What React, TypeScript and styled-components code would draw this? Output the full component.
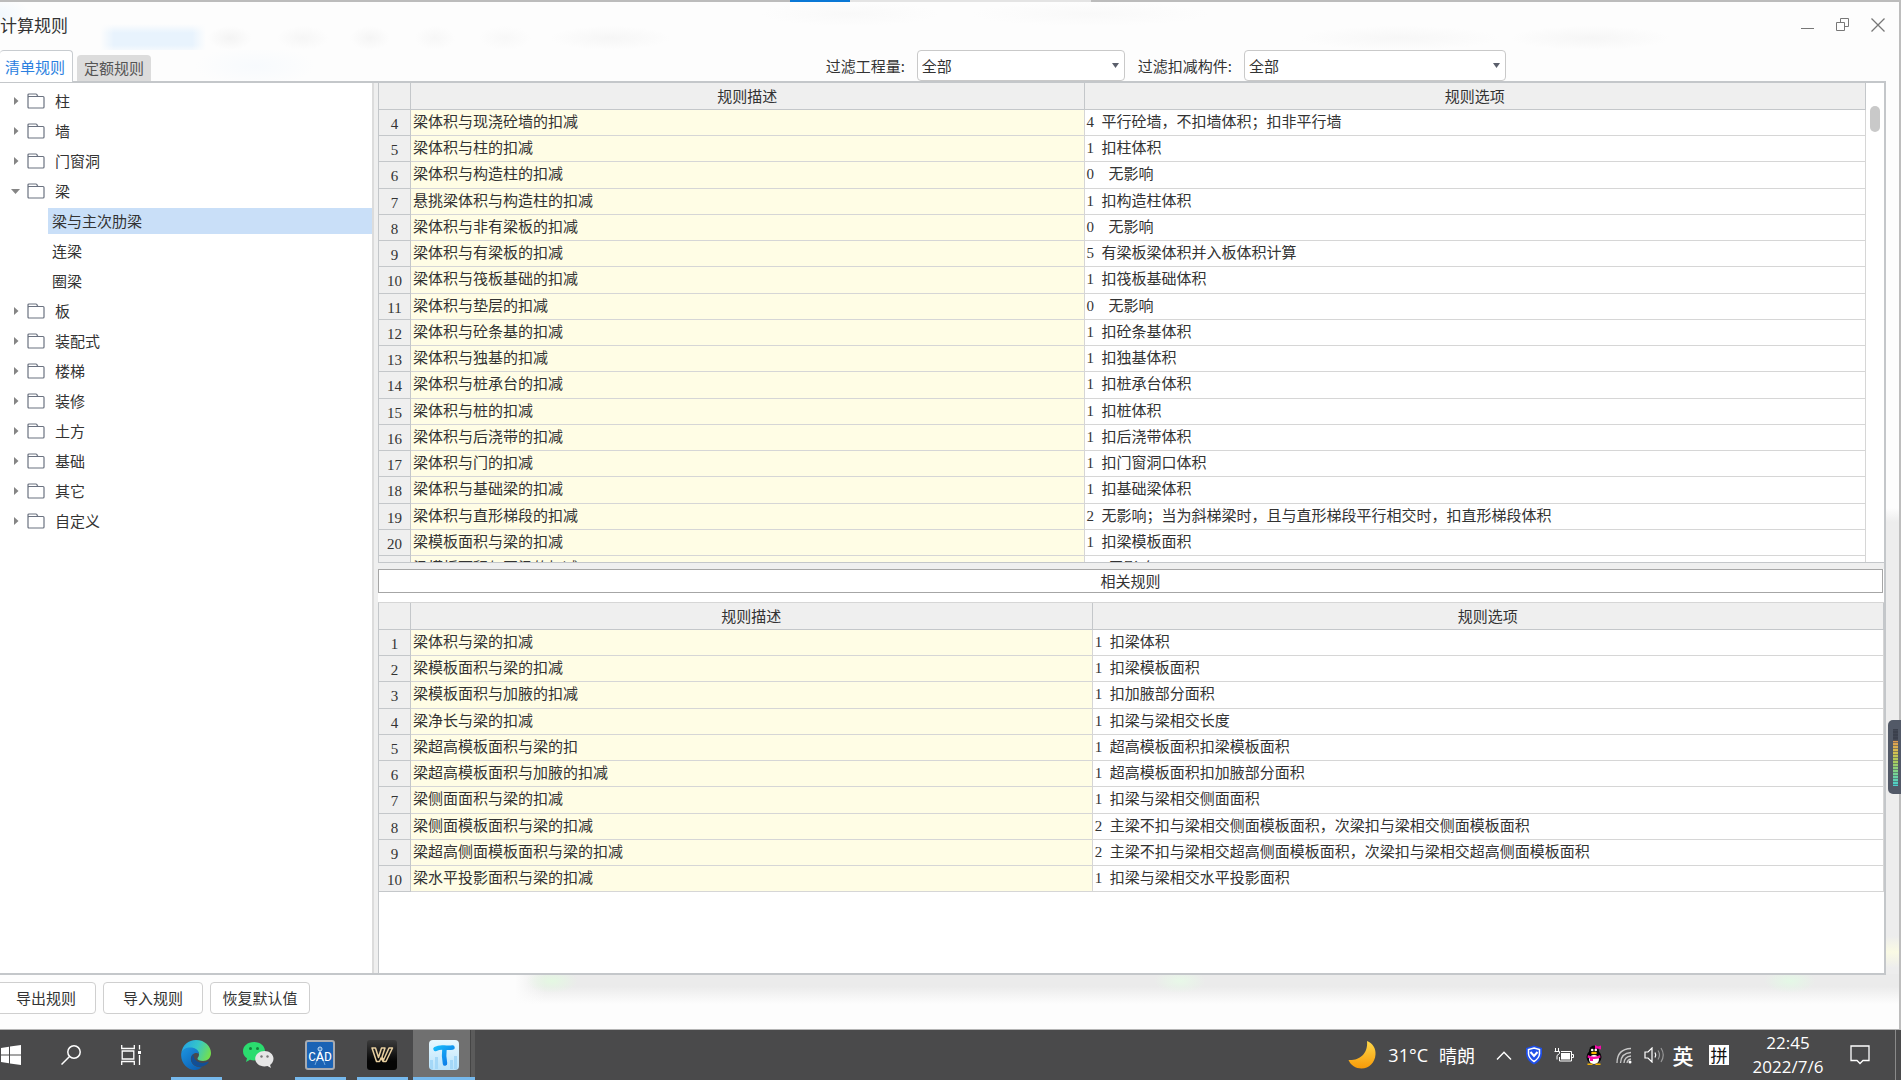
import React from "react";
import styled, { createGlobalStyle, css } from "styled-components";

const GlobalStyle = createGlobalStyle`
  * { box-sizing: border-box; }
  body { margin: 0; }
  body, button, select {
    font-family: "Noto Sans CJK SC", "Liberation Sans", sans-serif;
    font-size: 15px;
    line-height: 20px;
    color: #333;
  }
  button { border: 0; padding: 0; background: none; }
  svg { display: block; flex: none; }
`;

const line = "#c4c7ca";
const grid = "#d6d6d6";

const Screen = styled.div`
  height: 100vh;
  display: flex;
  flex-direction: column;
  overflow: hidden;
  position: relative;
`;

const Window = styled.main`
  flex: 1;
  min-height: 0;
  display: flex;
  flex-direction: column;
  border-right: 2px solid #bdbdbd;
  border-bottom: 1px solid #b4b4b4;
  background:
    radial-gradient(ellipse 26px 12px at 552px 981px, #e4f8e2, transparent),
    radial-gradient(ellipse 26px 12px at 1180px 981px, #e8f8e8, transparent),
    radial-gradient(ellipse 26px 12px at 1790px 981px, #e4f8e6, transparent),
    linear-gradient(transparent, #fafae4 50%, transparent) 100% 936px / 13px 32px no-repeat,
    linear-gradient(#fdfdfd, #ededed 14px) 100% 508px / 13px 466px no-repeat,
    linear-gradient(to right, #fdfdfd, transparent) 515px 972px / 30px 32px no-repeat,
    linear-gradient(#ebebeb 45%, #fdfdfd) 515px 972px / 1390px 32px no-repeat,
    #fdfdfd;
`;

const TopEdge = styled.div`
  height: 2px;
  flex: none;
  display: grid;
  grid-template-columns: 790px 60px 241px 1fr;
  background: #bcbcbc;
  span:nth-child(2) { background: #0a78d6; }
  span:nth-child(3) { background: #e4e4e4; }
`;

const TitleBar = styled.header`
  height: 48px;
  flex: none;
  display: flex;
  align-items: center;
  justify-content: space-between;
  padding: 0 4px 3px 0;
  background:
    radial-gradient(ellipse 60px 12px at 610px 36px, #f6f6f6, transparent),
    radial-gradient(ellipse 26px 12px at 505px 36px, #f8f8f8, transparent),
    radial-gradient(ellipse 20px 12px at 435px 36px, #f7f7f7, transparent),
    radial-gradient(ellipse 20px 12px at 370px 36px, #f5f5f5, transparent),
    radial-gradient(ellipse 26px 12px at 303px 36px, #f6f6f6, transparent),
    radial-gradient(ellipse 22px 12px at 230px 36px, #f4f4f4, transparent),
    linear-gradient(to right, #fdfdfd, transparent 14px calc(100% - 14px), #fdfdfd) 100px 22px / 106px 30px no-repeat,
    linear-gradient(#fdfdfd, #e8f3fd 30% 70%, #fdfdfd) 100px 22px / 106px 30px no-repeat,
    radial-gradient(ellipse 30px 16px at 0 12px, #f1f8fd, transparent),
    radial-gradient(ellipse 90px 12px at 850px 12px, #f9f9f9, transparent),
    radial-gradient(ellipse 120px 12px at 1090px 12px, #f9f9f9, transparent),
    radial-gradient(ellipse 100px 12px at 1400px 36px, #f7f7f7, transparent),
    radial-gradient(ellipse 80px 12px at 1590px 36px, #f6f6f6, transparent);
`;

const Title = styled.h1`
  margin: 0;
  font-size: 17px;
  font-weight: 400;
`;

const WindowButtons = styled.div`
  display: flex;
  button {
    width: 35px;
    height: 30px;
    display: grid;
    place-items: center;
  }
`;

const Toolbar = styled.div`
  height: 33px;
  flex: none;
  display: flex;
  align-items: flex-end;
  justify-content: space-between;
  margin-right: 13px;
  padding-right: 380px;
  border-bottom: 2px solid ${line};
  background: radial-gradient(ellipse 60px 20px at 255px 16px, #f7fafd, transparent);
`;

const Tabs = styled.div`
  display: flex;
  align-items: flex-end;
  gap: 4px;
`;

const Tab = styled.button<{ $active?: boolean }>`
  height: 26px;
  padding: 0 7px;
  border-radius: 4px 4px 0 0;
  background: #dcdcdc;
  color: #555;
  ${(p) =>
    p.$active &&
    css`
      height: 32px;
      margin-bottom: -1px;
      padding: 0 7px 0 5px;
      border: 1px solid #c8ccd0;
      border-width: 1px 1px 0 0;
      background: #fff;
      color: #2b7fe0;
    `}
`;

const Filters = styled.div`
  display: flex;
  align-items: center;
  label { margin-right: 12px; }
  label:not(:first-child) { margin-left: 13px; }
`;

const SelectBox = styled.div<{ $width: number }>`
  display: grid;
  align-items: center;
  width: ${(p) => p.$width}px;
  > * { grid-area: 1 / 1; }
  svg { justify-self: end; margin-right: 6px; pointer-events: none; }
`;

const Select = styled.select`
  appearance: none;
  width: 100%;
  height: 31px;
  padding: 0 4px;
  border: 1px solid #c9c9c9;
  border-radius: 4px;
  background: #fff;
`;

const Body = styled.div`
  flex: 1;
  min-height: 0;
  display: grid;
  grid-template-columns: 374px 4px minmax(0, 1fr);
  grid-template-rows: minmax(0, 1fr);
  margin-right: 13px;
  border-right: 2px solid ${line};
  border-bottom: 2px solid ${line};
  background: #fff;
`;

const Tree = styled.ul`
  list-style: none;
  margin: 0;
  padding: 3px 0 0;
  border-right: 2px solid #dcdcdc;
  overflow: hidden;
`;

const SubTree = styled.ul`
  list-style: none;
  margin: 0;
  padding: 0;
  li { padding: 2px 0 2px 48px; }
`;

const Branch = styled.button`
  height: 30px;
  width: 100%;
  padding-left: 11px;
  display: grid;
  grid-template-columns: 16px 28px 1fr;
  align-items: center;
  text-align: left;
`;

const Leaf = styled.button<{ $selected?: boolean }>`
  display: block;
  width: 100%;
  height: 26px;
  padding-left: 4px;
  text-align: left;
  background: ${(p) => (p.$selected ? "#c9dff8" : "transparent")};
`;

const Splitter = styled.div`
  background: #efefef;
`;

const Panes = styled.div`
  display: grid;
  grid-template-rows: minmax(0, 480fr) 6px 24px 9px minmax(0, 371fr);
`;

const Pane = styled.div<{ $scroll?: boolean }>`
  display: grid;
  grid-template-columns: minmax(0, 1fr) ${(p) => (p.$scroll ? "18px" : "0")};
  align-items: start;
  overflow: hidden;
  border-left: 1px solid ${line};
  ${(p) => p.$scroll && css`border-bottom: 1px solid ${line};`}
  ${(p) => !p.$scroll && css`border-top: 1px solid ${grid};`}
`;

const RelatedTitle = styled.h2`
  margin: 0 1px 0 0;
  border: 1px solid #a6a6a6;
  font-size: 15px;
  font-weight: 400;
  line-height: 22px;
  text-align: center;
  background: #fff;
`;

const ScrollTrack = styled.div`
  padding: 23px 4px 0 4px;
`;

const Thumb = styled.div`
  height: 26px;
  border-radius: 5px;
  background: #c9c9c9;
`;

const Table = styled.table`
  width: 100%;
  table-layout: fixed;
  border-collapse: separate;
  border-spacing: 0;
  th, td {
    padding: 0 2px 4px;
    border-right: 1px solid ${grid};
    border-bottom: 1px solid ${grid};
    font-weight: 400;
    text-align: left;
    white-space: pre;
    overflow: hidden;
  }
  thead tr { height: 27px; }
  thead th {
    padding-bottom: 0;
    border-color: ${line};
    background: #efefef;
    text-align: center;
  }
  tbody tr { height: 26px; }
  tbody tr:nth-child(4n + 3) { height: 27px; }
  tbody th {
    padding: 2px 2px 0;
    border-color: ${line};
    background: #efefef;
    font: 15px/20px "Liberation Serif", serif;
    text-align: center;
  }
  tbody td:nth-child(2) { background: #fffde5; }
  col:nth-child(1) { width: 32px; }
  col:nth-child(2) { width: 45.3%; }
`;

const Code = styled.span<{ $wide?: boolean }>`
  display: inline-block;
  width: ${(p) => (p.$wide ? 22 : 15)}px;
  font: 15px/16px "Liberation Serif", serif;
`;

const Footer = styled.footer`
  height: 54px;
  flex: none;
  display: flex;
  gap: 7px;
  padding-top: 7px;
  margin-left: -4px;
`;

const PushButton = styled.button`
  width: 100px;
  height: 32px;
  border: 1px solid #cfcfcf;
  border-radius: 4px;
  background: #fff;
`;

const Meter = styled.div`
  position: absolute;
  right: 0;
  top: 720px;
  width: 13px;
  height: 74px;
  padding: 9px 3px 8px 5px;
  border-radius: 5px 0 0 5px;
  background: #525967;
`;

const MeterBars = styled.div`
  height: 100%;
  background:
    repeating-linear-gradient(transparent 0 1px, rgba(70, 76, 90, 0.55) 1px 2px, transparent 2px 3px),
    linear-gradient(#3b404d 20%, #e09a50 21%, #d8c050 40%, #b0cc58 55%, #7fd48a 75%, #48cfd0);
`;

const Taskbar = styled.nav`
  height: 50px;
  flex: none;
  display: flex;
  background: #4a4a4b;
  button, button * { color: #fff; }
`;

const TaskItem = styled.button<{ $w: number; $start?: boolean }>`
  width: ${(p) => p.$w}px;
  display: grid;
  align-items: center;
  justify-items: ${(p) => (p.$start ? "start" : "center")};
`;

const Apps = styled.div`
  display: flex;
  margin-left: 4px;
`;

const AppItem = styled.button<{ $running?: boolean; $active?: boolean }>`
  width: 62px;
  display: grid;
  grid-template-rows: 47px 3px;
  justify-items: center;
  align-items: center;
  background: ${(p) => (p.$active ? "linear-gradient(to right, #707070 57px, #454545 57px 58px, #5b5b5b 58px)" : "none")};
  &::after {
    content: "";
    width: ${(p) => (p.$active ? 62 : 51)}px;
    height: 3px;
    background: ${(p) => (p.$running ? "#76b9ed" : "transparent")};
  }
  svg { margin-top: 3px; }
`;

const Weather = styled.button`
  display: flex;
  align-items: center;
  gap: 11px;
  margin-left: auto;
  padding-right: 14px;
  font-size: 18px;
  span:first-of-type { font-family: "Open Sans", sans-serif; }
`;

const Ime = styled.span`
  font-size: 21px;
  font-weight: 500;
`;

const Pinyin = styled.span`
  width: 20px;
  height: 20px;
  background: #fff;
  font-size: 17px;
  line-height: 19px;
  button && { color: #111; }
`;

const Clock = styled.button`
  width: 94px;
  font: 17px/24px "Open Sans", sans-serif;
  time { display: block; }
`;

const ShowDesktop = styled.button`
  width: 6px;
  margin-left: 10px;
  border-left: 1px solid #8a8a8a;
`;

const Caret = ({ open }: { open?: boolean }) => (
  <svg width="9" height="9" viewBox="0 0 9 9">
    <path d={open ? "M0 2h9L4.500 7z" : "M3 0v8L7.500 4z"} fill="#858585" />
  </svg>
);

const Folder = () => (
  <svg width="18" height="16" viewBox="0 0 18 16" fill="none" stroke="#6b7280" strokeWidth="1.2">
    <path d="M1 5V2Q1 1 2 1h7q1 0 1 1l1 1.500h5q1 0 1 1V14q0 1-1 1H2q-1 0-1-1V4.500Q1 3.500 2 3.500h9" />
  </svg>
);

const DropArrow = () => (
  <svg width="7" height="5" viewBox="0 0 7 5"><path d="M0 0h7L3.500 5z" fill="#5a5f6b" /></svg>
);

const EdgeLogo = () => (
  <svg width="30" height="30" viewBox="0 0 30 30">
    <defs>
      <linearGradient id="edgeTop" x1="0" y1="0.300" x2="1" y2="0.600">
        <stop offset="0" stopColor="#23a3e6" /><stop offset="0.500" stopColor="#36c6c8" /><stop offset="1" stopColor="#74e04c" />
      </linearGradient>
      <linearGradient id="edgeLow" x1="0" y1="0" x2="0.800" y2="1">
        <stop offset="0" stopColor="#1d95e0" /><stop offset="1" stopColor="#0b5fb4" />
      </linearGradient>
    </defs>
    <path d="M0.300 13C1.500 5 7.500 0 15 0c9 0 15 6.500 15 13 0 5-3.500 8-8 8-3.500 0-5.500-1.200-5.500-2.500 0-1 1.500-1.500 1.500-4C18 11 14 8 9.500 8 5 8 1.500 10 .300 13z" fill="url(#edgeTop)" />
    <path d="M0.300 13C1.500 9.500 5 7.500 9.500 7.500c4.500 0 8 2.500 8.500 6-5-2-9 2-8 7 1 5 7 7.500 11 6.500-2 2-4 3-7 3C6 30-1 22 .300 13z" fill="url(#edgeLow)" />
    <path d="M12.500 14C9 17 9.500 24 15 26c5 2 9.500 0 12.500-3.500.500-.700 0-1-.700-.700C20 25 12 21 12.500 14z" fill="#124f96" />
  </svg>
);

const WeChatLogo = () => (
  <svg width="31" height="26" viewBox="0 0 31 26">
    <path d="M11 0C4.500 0 0 4 0 9.200c0 3 1.500 5.500 4 7L3 20l4-2.200c1.500.500 2.700.600 4 .600 6.500 0 11-4.200 11-9.200S17.500 0 11 0z" fill="#2bdc6f" />
    <circle cx="7.500" cy="6.500" r="1.500" fill="#14803c" /><circle cx="14.500" cy="6.500" r="1.500" fill="#14803c" />
    <path d="M21.500 9c-5 0-9.300 3.300-9.300 7.700s4.300 7.700 9.300 7.700c1 0 2-.100 3-.400l3.500 1.900-.900-3c2-1.500 3.400-3.700 3.400-6.200C30.500 12.300 26.500 9 21.500 9z" fill="#e6e6e6" />
    <circle cx="18.500" cy="14.500" r="1.200" fill="#777" /><circle cx="24.500" cy="14.500" r="1.200" fill="#777" />
  </svg>
);

const CadLogo = () => (
  <svg width="30" height="30" viewBox="0 0 30 30">
    <rect width="30" height="30" rx="3" fill="#a8abb0" />
    <rect x="2" y="2" width="26" height="26" rx="1" fill="#1a63b5" />
    <path d="M15 8v3M15 11l-5 14M15 11l5 14" stroke="#6fa8e0" fill="none" />
    <circle cx="15" cy="9" r="2" fill="none" stroke="#cfe4f8" />
    <text x="15" y="21" textAnchor="middle" fontFamily="Liberation Mono, monospace" fontSize="13" fill="#fff">CAD</text>
  </svg>
);

const WLogo = () => (
  <svg width="30" height="30" viewBox="0 0 30 30">
    <defs>
      <linearGradient id="wBg" x1="0" y1="0" x2="0" y2="1"><stop offset="0" stopColor="#3c3c3c" /><stop offset="0.700" stopColor="#050505" /></linearGradient>
    </defs>
    <rect width="30" height="30" rx="3" fill="url(#wBg)" />
    <path d="M5 8h3.500l3 9.500 3-9.500H18l-3 9 1.500 3L22 8h3.500l-6.500 13.500h-3L14 18l-1.500 3.500h-3z" fill="none" stroke="#e8cfa0" strokeWidth="1.500" strokeLinejoin="round" />
  </svg>
);

const TLogo = () => (
  <svg width="30" height="30" viewBox="0 0 30 30">
    <defs>
      <linearGradient id="tBg" x1="0" y1="0" x2="0" y2="1"><stop offset="0" stopColor="#e8f8ff" /><stop offset="1" stopColor="#b9e3fb" /></linearGradient>
      <linearGradient id="tFg" x1="0" y1="0" x2="1" y2="1"><stop offset="0" stopColor="#16b8fa" /><stop offset="1" stopColor="#0a74e6" /></linearGradient>
    </defs>
    <rect width="30" height="30" rx="4" fill="url(#tBg)" />
    <path d="M1 20h3v9H1zM6 17h3v12H6zM21 20h3v9h-3zM25 16h3v13h-3z" fill="#a4d8f8" />
    <path d="M6.500 9Q10 7 15 7.500q5 .500 8.500 0M15.500 8q-1 8 .500 15.500" fill="none" stroke="url(#tFg)" strokeWidth="4.500" strokeLinecap="round" />
  </svg>
);

const Moon = () => (
  <svg width="29" height="28" viewBox="0 0 29 28">
    <defs><linearGradient id="moon" x1="0" y1="0" x2="0" y2="1"><stop offset="0" stopColor="#ffd84a" /><stop offset="1" stopColor="#f79a08" /></linearGradient></defs>
    <path d="M19 0c6 2.500 9 7.500 8.500 13.500C27 21.500 21 27.500 13.500 27.500 7.500 27.500 3 24.500.500 19c9 1 20-5 18.500-19z" fill="url(#moon)" />
  </svg>
);

const QQ = () => (
  <svg width="18" height="20" viewBox="0 0 18 20">
    <ellipse cx="9" cy="12" rx="7.500" ry="7" fill="#080808" />
    <ellipse cx="9" cy="6.500" rx="5" ry="6" fill="#080808" />
    <ellipse cx="9" cy="14.500" rx="5" ry="4.500" fill="#fff" />
    <path d="M3 10q6 3.500 12 0l.500 2.500Q9 15.500 2.500 12.500z" fill="#f50aa8" />
    <path d="M5 12h3v4H5zM10 0l3 1.500L16 .500v4l-3-1L10 4z" fill="#f50aa8" />
    <circle cx="7.200" cy="5" r="1.300" fill="#fff" /><circle cx="10.800" cy="5" r="1.300" fill="#fff" />
    <ellipse cx="9" cy="8" rx="3" ry="1.200" fill="#f6b400" />
    <path d="M2.500 18.500h5V20h-5zM10.500 18.500h5V20h-5z" fill="#f6b400" />
  </svg>
);

type Rule = [string, string, string];

const RULES: Rule[] = [
  ["梁体积与现浇砼墙的扣减", "4", "平行砼墙，不扣墙体积；扣非平行墙"],
  ["梁体积与柱的扣减", "1", "扣柱体积"],
  ["梁体积与构造柱的扣减", "0", "无影响"],
  ["悬挑梁体积与构造柱的扣减", "1", "扣构造柱体积"],
  ["梁体积与非有梁板的扣减", "0", "无影响"],
  ["梁体积与有梁板的扣减", "5", "有梁板梁体积并入板体积计算"],
  ["梁体积与筏板基础的扣减", "1", "扣筏板基础体积"],
  ["梁体积与垫层的扣减", "0", "无影响"],
  ["梁体积与砼条基的扣减", "1", "扣砼条基体积"],
  ["梁体积与独基的扣减", "1", "扣独基体积"],
  ["梁体积与桩承台的扣减", "1", "扣桩承台体积"],
  ["梁体积与桩的扣减", "1", "扣桩体积"],
  ["梁体积与后浇带的扣减", "1", "扣后浇带体积"],
  ["梁体积与门的扣减", "1", "扣门窗洞口体积"],
  ["梁体积与基础梁的扣减", "1", "扣基础梁体积"],
  ["梁体积与直形梯段的扣减", "2", "无影响；当为斜梯梁时，且与直形梯段平行相交时，扣直形梯段体积"],
  ["梁模板面积与梁的扣减", "1", "扣梁模板面积"],
  ["梁模板面积与圈梁的扣减", "0", "无影响"],
];

const RELATED: Rule[] = [
  ["梁体积与梁的扣减", "1", "扣梁体积"],
  ["梁模板面积与梁的扣减", "1", "扣梁模板面积"],
  ["梁模板面积与加腋的扣减", "1", "扣加腋部分面积"],
  ["梁净长与梁的扣减", "1", "扣梁与梁相交长度"],
  ["梁超高模板面积与梁的扣", "1", "超高模板面积扣梁模板面积"],
  ["梁超高模板面积与加腋的扣减", "1", "超高模板面积扣加腋部分面积"],
  ["梁侧面面积与梁的扣减", "1", "扣梁与梁相交侧面面积"],
  ["梁侧面模板面积与梁的扣减", "2", "主梁不扣与梁相交侧面模板面积，次梁扣与梁相交侧面模板面积"],
  ["梁超高侧面模板面积与梁的扣减", "2", "主梁不扣与梁相交超高侧面模板面积，次梁扣与梁相交超高侧面模板面积"],
  ["梁水平投影面积与梁的扣减", "1", "扣梁与梁相交水平投影面积"],
];

const RuleTable = ({ rows, first }: { rows: Rule[]; first: number }) => (
  <Table>
    <colgroup><col /><col /><col /></colgroup>
    <thead>
      <tr><th /><th scope="col">规则描述</th><th scope="col">规则选项</th></tr>
    </thead>
    <tbody>
      {rows.map(([name, code, option], i) => (
        <tr key={name}>
          <th scope="row">{first + i}</th>
          <td>{name}</td>
          <td><Code $wide={code === "0"}>{code}</Code>{option}</td>
        </tr>
      ))}
    </tbody>
  </Table>
);

const TREE: { name: string; children?: string[] }[] = [
  { name: "柱" }, { name: "墙" }, { name: "门窗洞" },
  { name: "梁", children: ["梁与主次肋梁", "连梁", "圈梁"] },
  { name: "板" }, { name: "装配式" }, { name: "楼梯" }, { name: "装修" },
  { name: "土方" }, { name: "基础" }, { name: "其它" }, { name: "自定义" },
];

const Filter = ({ id, label, width }: { id: string; label: string; width: number }) => (
  <>
    <label htmlFor={id}>{label}</label>
    <SelectBox $width={width}>
      <Select id={id}><option>全部</option></Select>
      <DropArrow />
    </SelectBox>
  </>
);

export default function App() {
  return (
    <Screen>
      <GlobalStyle />
      <Window>
        <TopEdge><span /><span /><span /></TopEdge>
        <TitleBar>
          <Title>计算规则</Title>
          <WindowButtons>
            <button aria-label="最小化"><svg width="13" height="13" stroke="#777"><path d="M0 10.500h13" /></svg></button>
            <button aria-label="还原">
              <svg width="13" height="13" fill="none" stroke="#777"><path d="M.500 4.500h8v8h-8zM4.500 4.500v-4h8v8h-4" /></svg>
            </button>
            <button aria-label="关闭"><svg width="14" height="14" stroke="#777" strokeWidth="1.300"><path d="M.500.500l13 13M13.500.500l-13 13" /></svg></button>
          </WindowButtons>
        </TitleBar>
        <Toolbar>
          <Tabs>
            <Tab $active>清单规则</Tab>
            <Tab>定额规则</Tab>
          </Tabs>
          <Filters>
            <Filter id="quantity" label="过滤工程量:" width={208} />
            <Filter id="component" label="过滤扣减构件:" width={262} />
          </Filters>
        </Toolbar>
        <Body>
          <Tree>
            {TREE.map(({ name, children }) => (
              <li key={name}>
                <Branch><Caret open={!!children} /><Folder /><span>{name}</span></Branch>
                {children && (
                  <SubTree>
                    {children.map((c, i) => <li key={c}><Leaf $selected={i === 0}>{c}</Leaf></li>)}
                  </SubTree>
                )}
              </li>
            ))}
          </Tree>
          <Splitter />
          <Panes>
            <Pane $scroll>
              <RuleTable rows={RULES} first={4} />
              <ScrollTrack><Thumb /></ScrollTrack>
            </Pane>
            <Splitter />
            <RelatedTitle>相关规则</RelatedTitle>
            <div />
            <Pane>
              <RuleTable rows={RELATED} first={1} />
            </Pane>
          </Panes>
        </Body>
        <Footer>
          <PushButton>导出规则</PushButton>
          <PushButton>导入规则</PushButton>
          <PushButton>恢复默认值</PushButton>
        </Footer>
      </Window>
      <Meter><MeterBars /></Meter>
      <Taskbar>
        <TaskItem $w={40} $start aria-label="开始">
          <svg width="21" height="20" viewBox="0 0 21 20" fill="#fff"><path d="M1 3l8-1.300V9.500H1zM10 1.500L21 0v9.500H10zM1 10.500h8v7.800L1 17zM10 10.500h11V20l-11-1.500z" /></svg>
        </TaskItem>
        <TaskItem $w={61} aria-label="搜索">
          <svg width="20" height="20" fill="none" stroke="#fff" strokeWidth="1.500"><circle cx="13" cy="7" r="6.200" /><path d="M8.500 11.500L.500 19.500" /></svg>
        </TaskItem>
        <TaskItem $w={60} aria-label="任务视图">
          <svg width="21" height="20" fill="none" stroke="#fff" strokeWidth="1.300"><path d="M.700 0v3.500h12.600V0M.700 20v-3.500h12.600V20M1.200 6h11.600v8H1.200zM18.500 0v4.500M18.500 10v10" /><path d="M17 6h3v3h-3z" fill="#fff" stroke="none" /></svg>
        </TaskItem>
        <Apps>
          <AppItem $running aria-label="Edge"><EdgeLogo /></AppItem>
          <AppItem aria-label="微信"><WeChatLogo /></AppItem>
          <AppItem $running aria-label="CAD"><CadLogo /></AppItem>
          <AppItem $running aria-label="W"><WLogo /></AppItem>
          <AppItem $running $active aria-label="T"><TLogo /></AppItem>
        </Apps>
        <Weather><Moon /><span>31°C</span><span>晴朗</span></Weather>
        <TaskItem $w={30} aria-label="显示隐藏的图标">
          <svg width="16" height="9" fill="none" stroke="#fff" strokeWidth="1.400"><path d="M1 8.500L8 1.200l7 7.300" /></svg>
        </TaskItem>
        <TaskItem $w={30} aria-label="安全">
          <svg width="18" height="20" viewBox="0 0 18 20"><path d="M9 .500l8 2.500v6q-.500 7-8 10.500Q1.500 16 1 9V3z" fill="#1f4fe8" /><path d="M9 3l5.500 1.500v4.500q-.500 4.500-5.500 7.500Q4 13.500 3.500 9V4.500z" fill="none" stroke="#fff" strokeWidth="1.500" /><path d="M5.500 7L9 11l3.500-4" fill="none" stroke="#fff" strokeWidth="2" /></svg>
        </TaskItem>
        <TaskItem $w={30} aria-label="电池">
          <svg width="20" height="14" fill="none" stroke="#fff"><path d="M7 3.500h10.500v9.500H5.500V9M18 6.500h1.500v3H18M1.500 0v3M4.500 0v3M.500 3.500h5v2l-2.500 2v4" /><path d="M7 5h9v6.500H7z" fill="#fff" stroke="none" /></svg>
        </TaskItem>
        <TaskItem $w={30} aria-label="QQ"><QQ /></TaskItem>
        <TaskItem $w={30} aria-label="网络">
          <svg width="16" height="17" fill="none" stroke="#c8c8c8" strokeWidth="1.300"><path d="M1 16Q1 2 15 1.500M4.500 16Q5 6 15 5.500M8 16q.500-6.500 7-7M11 16q.500-3.500 4-4" /><circle cx="14" cy="15" r="1.500" fill="#fff" stroke="none" /></svg>
        </TaskItem>
        <TaskItem $w={30} aria-label="音量">
          <svg width="21" height="16" fill="none" stroke="#fff" strokeWidth="1.200"><path d="M1 5h3l4-4v14l-4-4H1z" /><path d="M11 5.500q1.500 2.500 0 5" /><path d="M14 3.500q3 4.500 0 9M17 1q4.500 7 0 14" stroke="#999" /></svg>
        </TaskItem>
        <TaskItem $w={28}><Ime>英</Ime></TaskItem>
        <TaskItem $w={44}><Pinyin>拼</Pinyin></TaskItem>
        <Clock><time>22:45</time><time>2022/7/6</time></Clock>
        <TaskItem $w={50} aria-label="通知">
          <svg width="20" height="20" fill="none" stroke="#fff" strokeWidth="1.300"><path d="M1 1h18v14.500h-6L10 18.500 7 15.500H1z" /></svg>
        </TaskItem>
        <ShowDesktop aria-label="显示桌面" />
      </Taskbar>
    </Screen>
  );
}
